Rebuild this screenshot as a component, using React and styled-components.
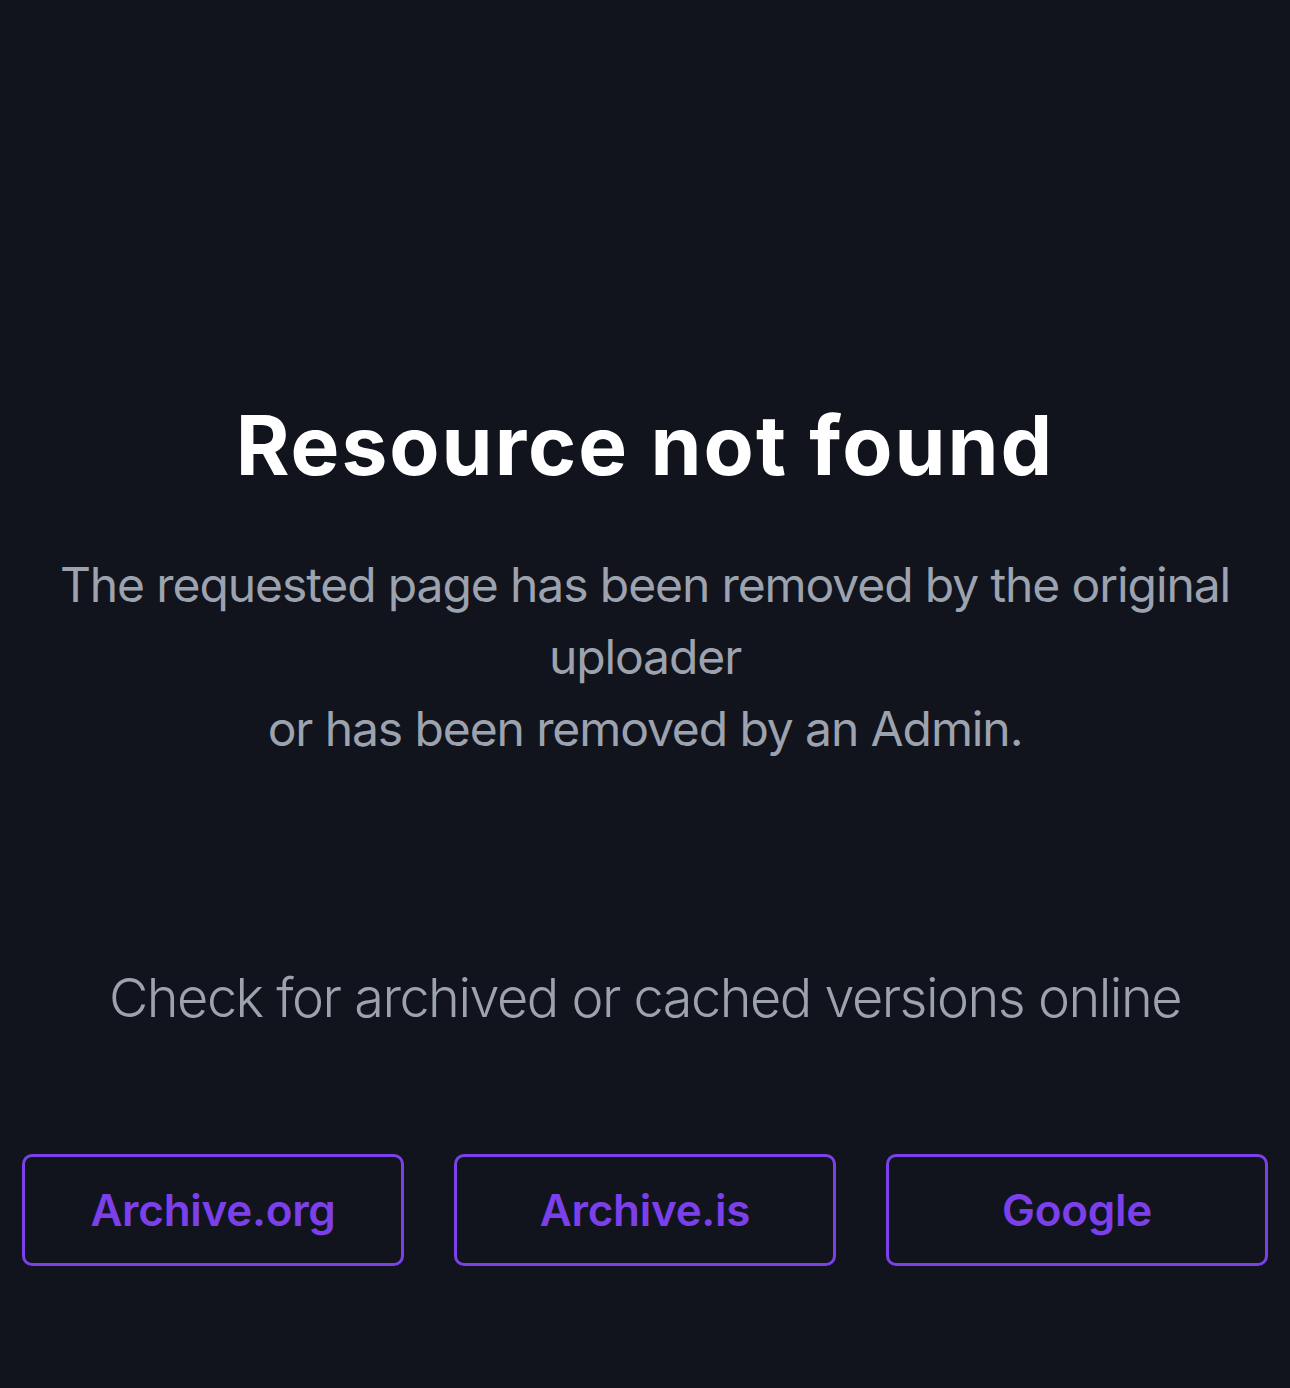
import React from 'react';
import styled, { createGlobalStyle } from 'styled-components';

const GlobalStyle = createGlobalStyle`
  html, body {
    margin: 0;
    padding: 0;
    background: #11141c;
  }
  body {
    font-family: Inter, "Noto Sans", "Liberation Sans", sans-serif;
    -webkit-font-smoothing: antialiased;
  }
`;

const Page = styled.main`
  min-height: 1388px;
  box-sizing: border-box;
  padding: 399px 22px 0;
  display: flex;
  flex-direction: column;
  align-items: center;
  text-align: center;
  background: #11141c;
`;

const Title = styled.h1`
  margin: 0;
  font-size: 82px;
  line-height: 94px;
  font-weight: 700;
  letter-spacing: 2px;
  color: #ffffff;
`;

const Message = styled.p`
  margin: 56px 0 0;
  font-size: 48px;
  line-height: 72px;
  font-weight: 400;
  letter-spacing: -1.1px;
  color: #9ca3af;
`;

const Hint = styled.p`
  margin: 192px 0 0;
  font-size: 54px;
  line-height: 81px;
  font-weight: 300;
  letter-spacing: -1.5px;
  white-space: nowrap;
  color: #9ca3af;
`;

const Links = styled.div`
  margin-top: 116px;
  width: 100%;
  display: grid;
  grid-template-columns: repeat(3, 1fr);
  gap: 50px;
`;

const LinkButton = styled.a`
  box-sizing: border-box;
  height: 112px;
  display: flex;
  align-items: center;
  justify-content: center;
  border: 3px solid #7c40ea;
  border-radius: 10px;
  color: #7c40ea;
  font-size: 44px;
  font-weight: 600;
  letter-spacing: -0.3px;
  text-decoration: none;
`;

const links = [
  { label: 'Archive.org', href: '#archive-org' },
  { label: 'Archive.is', href: '#archive-is' },
  { label: 'Google', href: '#google' },
];

export default function App() {
  return (
    <>
      <GlobalStyle />
      <Page>
        <Title>Resource not found</Title>
        <Message>
          The requested page has been removed by the original uploader
          <br />
          or has been removed by an Admin.
        </Message>
        <Hint>Check for archived or cached versions online</Hint>
        <Links>
          {links.map((l) => (
            <LinkButton key={l.label} href={l.href}>
              {l.label}
            </LinkButton>
          ))}
        </Links>
      </Page>
    </>
  );
}
